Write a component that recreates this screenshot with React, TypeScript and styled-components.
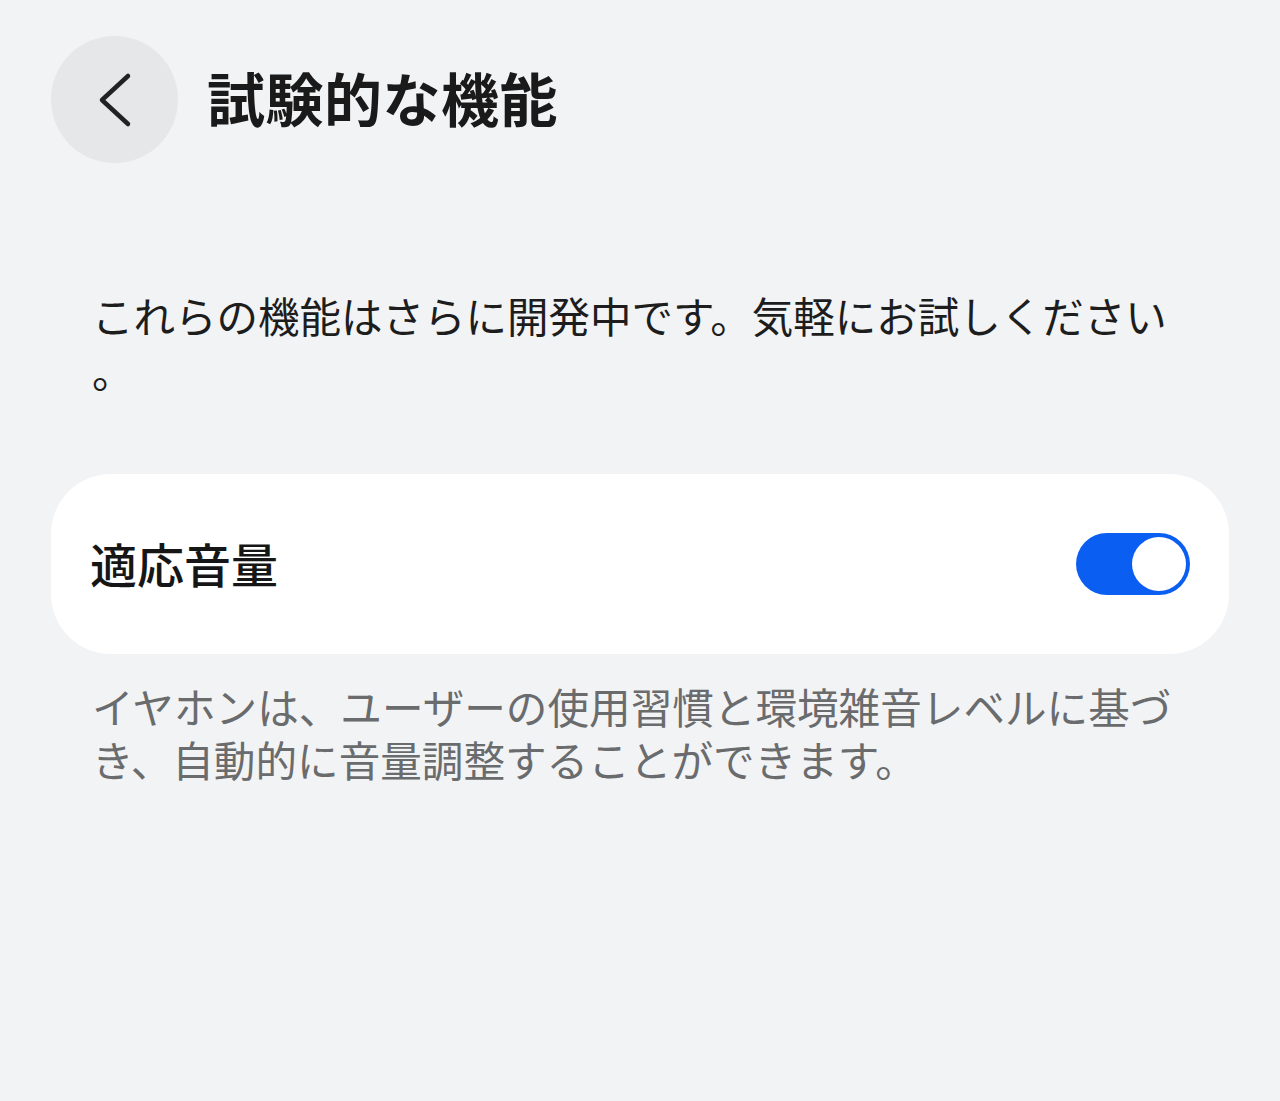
import React, { useState } from "react";
import styled, { createGlobalStyle } from "styled-components";

const GlobalStyle = createGlobalStyle`
  html, body {
    margin: 0;
    padding: 0;
    background: #f2f3f5;
  }
  body {
    font-family: "Noto Sans CJK JP", "Noto Sans", sans-serif;
    color: #1b1b1b;
  }
`;

const Page = styled.div`
  min-height: 1101px;
  background: #f2f3f5;
  padding: 36px 51px 0 51px;
  box-sizing: border-box;
`;

const Header = styled.div`
  display: flex;
  align-items: center;
  gap: 29px;
`;

const BackButton = styled.button`
  width: 127px;
  height: 127px;
  border-radius: 50%;
  border: none;
  background: #e6e7e9;
  display: flex;
  align-items: center;
  justify-content: center;
  padding: 0;
  cursor: pointer;
`;

const Title = styled.h1`
  margin: 0;
  font-size: 58px;
  font-weight: 700;
  letter-spacing: 0.5px;
  color: #1a1a1a;
  line-height: 1;
  padding-bottom: 5px;
`;

const Intro = styled.p`
  margin: 125px 42px 0 41px;
  font-size: 41.5px;
  line-height: 55px;
  color: #1d1d1d;
  font-weight: 400;
  line-break: anywhere;
`;

const Card = styled.div`
  margin-top: 76px;
  height: 180px;
  background: #ffffff;
  border-radius: 60px;
  display: flex;
  align-items: center;
  justify-content: space-between;
  padding: 0 39px 0 39px;
  box-sizing: border-box;
`;

const CardLabel = styled.span`
  font-size: 47px;
  color: #161616;
  font-weight: 500;
  padding-bottom: 4px;
`;

const Track = styled.button<{ $on: boolean }>`
  width: 114px;
  height: 62px;
  border-radius: 31px;
  border: none;
  padding: 4px;
  background: ${(p) => (p.$on ? "#0b5ef2" : "#c4c7cc")};
  display: flex;
  justify-content: ${(p) => (p.$on ? "flex-end" : "flex-start")};
  align-items: center;
  box-sizing: border-box;
  cursor: pointer;
`;

const Knob = styled.span`
  width: 54px;
  height: 54px;
  border-radius: 50%;
  background: #ffffff;
  display: block;
`;

const Caption = styled.p`
  margin: 26px 40px 0 41px;
  font-size: 41.6px;
  line-height: 53px;
  color: #6a6b6d;
`;

export default function App() {
  const [on, setOn] = useState(true);
  return (
    <>
      <GlobalStyle />
      <Page>
        <Header>
          <BackButton aria-label="戻る">
            <svg width="40" height="56" viewBox="0 0 40 56" fill="none">
              <path
                d="M33 4 L7 28 L33 52"
                stroke="#222"
                strokeWidth="4.5"
                strokeLinecap="round"
                strokeLinejoin="round"
              />
            </svg>
          </BackButton>
          <Title>試験的な機能</Title>
        </Header>
        <Intro>これらの機能はさらに開発中です。気軽にお試しください。</Intro>
        <Card>
          <CardLabel>適応音量</CardLabel>
          <Track $on={on} onClick={() => setOn(!on)} aria-label="適応音量">
            <Knob />
          </Track>
        </Card>
        <Caption>
          イヤホンは、ユーザーの使用習慣と環境雑音レベルに基づき、自動的に音量調整することができます。
        </Caption>
      </Page>
    </>
  );
}
